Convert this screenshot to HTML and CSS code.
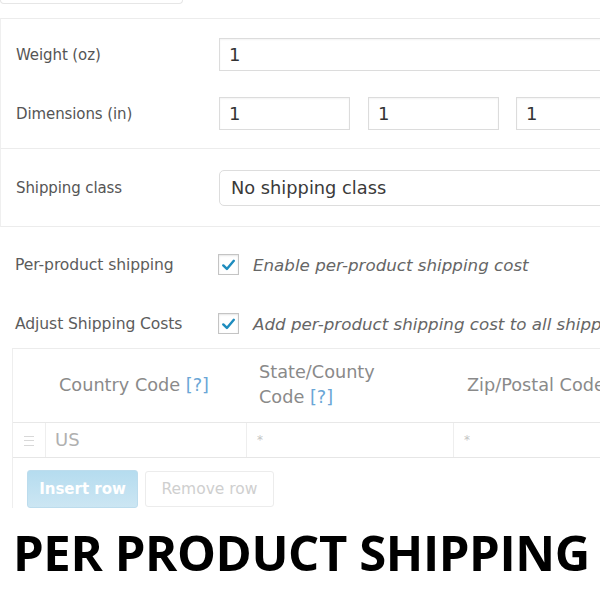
FILE: index.html
```html
<!DOCTYPE html>
<html>
<head>
<meta charset="utf-8">
<link rel="stylesheet" href="styles.css">
</head>
<body>
<div class="page">
  <div class="top-input"></div>

  <div class="section sec-dims">
    <div class="row">
      <div class="label">Weight (oz)</div>
      <div class="field"><div class="input wide">1</div></div>
    </div>
    <div class="row">
      <div class="label">Dimensions (in)</div>
      <div class="field dims">
        <div class="input d1">1</div>
        <div class="input d2">1</div>
        <div class="input d3">1</div>
      </div>
    </div>
  </div>

  <div class="section sec-class">
    <div class="row">
      <div class="label">Shipping class</div>
      <div class="field"><div class="select">No shipping class</div></div>
    </div>
  </div>

  <div class="section sec-checks">
    <div class="row check-row">
      <div class="label">Per-product shipping</div>
      <div class="field">
        <span class="checkbox"><svg viewBox="0 0 20 20" width="20" height="20"><path d="M4.5 10.5 L8.3 14.2 L15.6 5.6" fill="none" stroke="#1e8cbe" stroke-width="2.6" stroke-linecap="round" stroke-linejoin="round"/></svg></span>
        <span class="desc">Enable per-product shipping cost</span>
      </div>
    </div>
    <div class="row check-row">
      <div class="label">Adjust Shipping Costs</div>
      <div class="field">
        <span class="checkbox"><svg viewBox="0 0 20 20" width="20" height="20"><path d="M4.5 10.5 L8.3 14.2 L15.6 5.6" fill="none" stroke="#1e8cbe" stroke-width="2.6" stroke-linecap="round" stroke-linejoin="round"/></svg></span>
        <span class="desc">Add per-product shipping cost to all shipping method rates?</span>
      </div>
    </div>
  </div>

  <div class="table-wrap">
    <div class="thead">
      <div class="c-handle"></div>
      <div class="c-country">Country Code <span class="help">[?]</span></div>
      <div class="c-state">State/County<br>Code <span class="help">[?]</span></div>
      <div class="c-zip">Zip/Postal Code <span class="help">[?]</span></div>
    </div>
    <div class="tbody">
      <div class="c-handle"><span class="grip"></span></div>
      <div class="c-country cell">US</div>
      <div class="c-state cell star">*</div>
      <div class="c-zip cell star">*</div>
    </div>
    <div class="tfoot">
      <span class="btn primary">Insert row</span>
      <span class="btn secondary">Remove row</span>
    </div>
  </div>

  <h1 class="title">PER PRODUCT SHIPPING</h1>
</div>
</body>
</html>
```

FILE: styles.css
```css
html, body {
  margin: 0;
  padding: 0;
  background: #fff;
}
.page {
  width: 600px;
  height: 600px;
  overflow: hidden;
  font-family: "DejaVu Sans", "Liberation Sans", sans-serif;
  color: #555;
}
.top-input {
  width: 181px;
  height: 3px;
  border: 1px solid #e6e6e6;
  border-top: none;
  border-radius: 0 0 5px 5px;
}
.section {
  border-left: 1px solid #efefef;
  border-bottom: 1px solid #ececec;
}
.sec-dims {
  margin-top: 14px;
  border-top: 1px solid #ececec;
  padding: 19px 0 18px 0;
  display: flex;
  flex-direction: column;
  gap: 26px;
}
.sec-class {
  padding: 21px 0 20px 0;
}
.sec-checks {
  border-bottom: none;
  border-left: none;
  padding: 27px 0 0 0;
  display: flex;
  flex-direction: column;
  gap: 38px;
}
.row {
  display: flex;
  align-items: center;
}
.label {
  width: 203px;
  padding-left: 15px;
  font-size: 15px;
  color: #555;
  flex-shrink: 0;
  letter-spacing: -0.1px;
}
.field {
  flex: 1;
  display: flex;
  align-items: center;
  min-width: 0;
  white-space: nowrap;
}
.input {
  box-sizing: border-box;
  height: 33px;
  border: 1px solid #dcdcdc;
  box-shadow: inset 0 1px 2px rgba(0,0,0,0.05);
  font-size: 18px;
  color: #333;
  line-height: 31px;
  padding-left: 9px;
  flex-shrink: 0;
}
.wide { width: 400px; }
.dims { gap: 0; }
.d1 { width: 131px; margin-right: 18px; }
.d2 { width: 131px; margin-right: 17px; }
.d3 { width: 120px; }
.select {
  box-sizing: border-box;
  width: 400px;
  height: 36px;
  border: 1px solid #ddd;
  border-radius: 5px;
  font-size: 17.8px;
  line-height: 34px;
  padding-left: 11px;
  color: #3a3a3a;
  flex-shrink: 0;
}
.check-row .label { color: #5c5c5c; font-size: 15.6px; }
.checkbox {
  box-sizing: border-box;
  width: 21px;
  height: 21px;
  border: 1px solid #c4c4c4;
  box-shadow: inset 0 1px 2px rgba(0,0,0,0.1);
  display: inline-flex;
  align-items: center;
  justify-content: center;
  flex-shrink: 0;
}
.checkbox svg { display: block; }
.desc {
  margin-left: 14px;
  font-style: italic;
  font-size: 16.7px;
  color: #666;
}
.table-wrap {
  margin: 14px 0 0 12px;
  border-left: 1px solid #eee;
  border-top: 1px solid #ececec;
  width: 700px;
}
.thead, .tbody {
  display: flex;
}
.thead {
  height: 73px;
  align-items: center;
  border-bottom: 1px solid #e8e8e8;
  font-size: 17.7px;
  color: #8a8a8a;
  line-height: 25px;
}
.help { color: #6aa6d6; }
.c-handle { width: 32px; flex-shrink: 0; }
.c-country { width: 201px; flex-shrink: 0; box-sizing: border-box; }
.c-state { width: 207px; flex-shrink: 0; box-sizing: border-box; }
.c-zip { width: 200px; flex-shrink: 0; box-sizing: border-box; white-space: nowrap; }
.thead .c-country { padding-left: 14px; }
.thead .c-state { padding-left: 13px; padding-bottom: 2px; }
.thead .c-zip { padding-left: 14px; }
.tbody {
  height: 34px;
  border-bottom: 1px solid #e6e6e6;
}
.tbody .c-handle {
  display: flex;
  align-items: center;
  justify-content: center;
}
.grip {
  width: 10px;
  height: 8px;
  border-top: 1px solid #d8d8d8;
  border-bottom: 1px solid #d8d8d8;
  position: relative;
  margin-top: 1px;
}
.grip::after {
  content: "";
  position: absolute;
  left: 0;
  right: 0;
  top: 3.5px;
  border-top: 1px solid #d8d8d8;
}
.cell {
  border-left: 1px solid #eee;
  line-height: 34px;
}
.tbody .c-country {
  font-size: 18px;
  color: #b0b0b0;
  padding-left: 9px;
}
.star {
  font-size: 12px;
  color: #c4c4c4;
  padding-left: 10px;
}
.tfoot {
  display: flex;
  align-items: center;
  gap: 7px;
  padding: 12px 0 0 14px;
  height: 50px;
  box-sizing: border-box;
}
.btn {
  box-sizing: border-box;
  display: inline-flex;
  align-items: center;
  justify-content: center;
  font-size: 15px;
  border-radius: 3px;
}
.primary {
  width: 111px;
  height: 38px;
  background: linear-gradient(#b5dcef, #cce6f3);
  border: 1px solid #bcdced;
  color: #fff;
  font-weight: bold;
}
.secondary {
  width: 129px;
  height: 36px;
  border: 1px solid #ececec;
  color: #cfcfcf;
  font-size: 15.5px;
}
.title {
  margin: 14px 0 0 13px;
  font-family: "Open Sans", sans-serif;
  font-weight: 700;
  font-size: 49px;
  line-height: 60px;
  color: #000;
  letter-spacing: -0.4px;
  white-space: nowrap;
}
```
